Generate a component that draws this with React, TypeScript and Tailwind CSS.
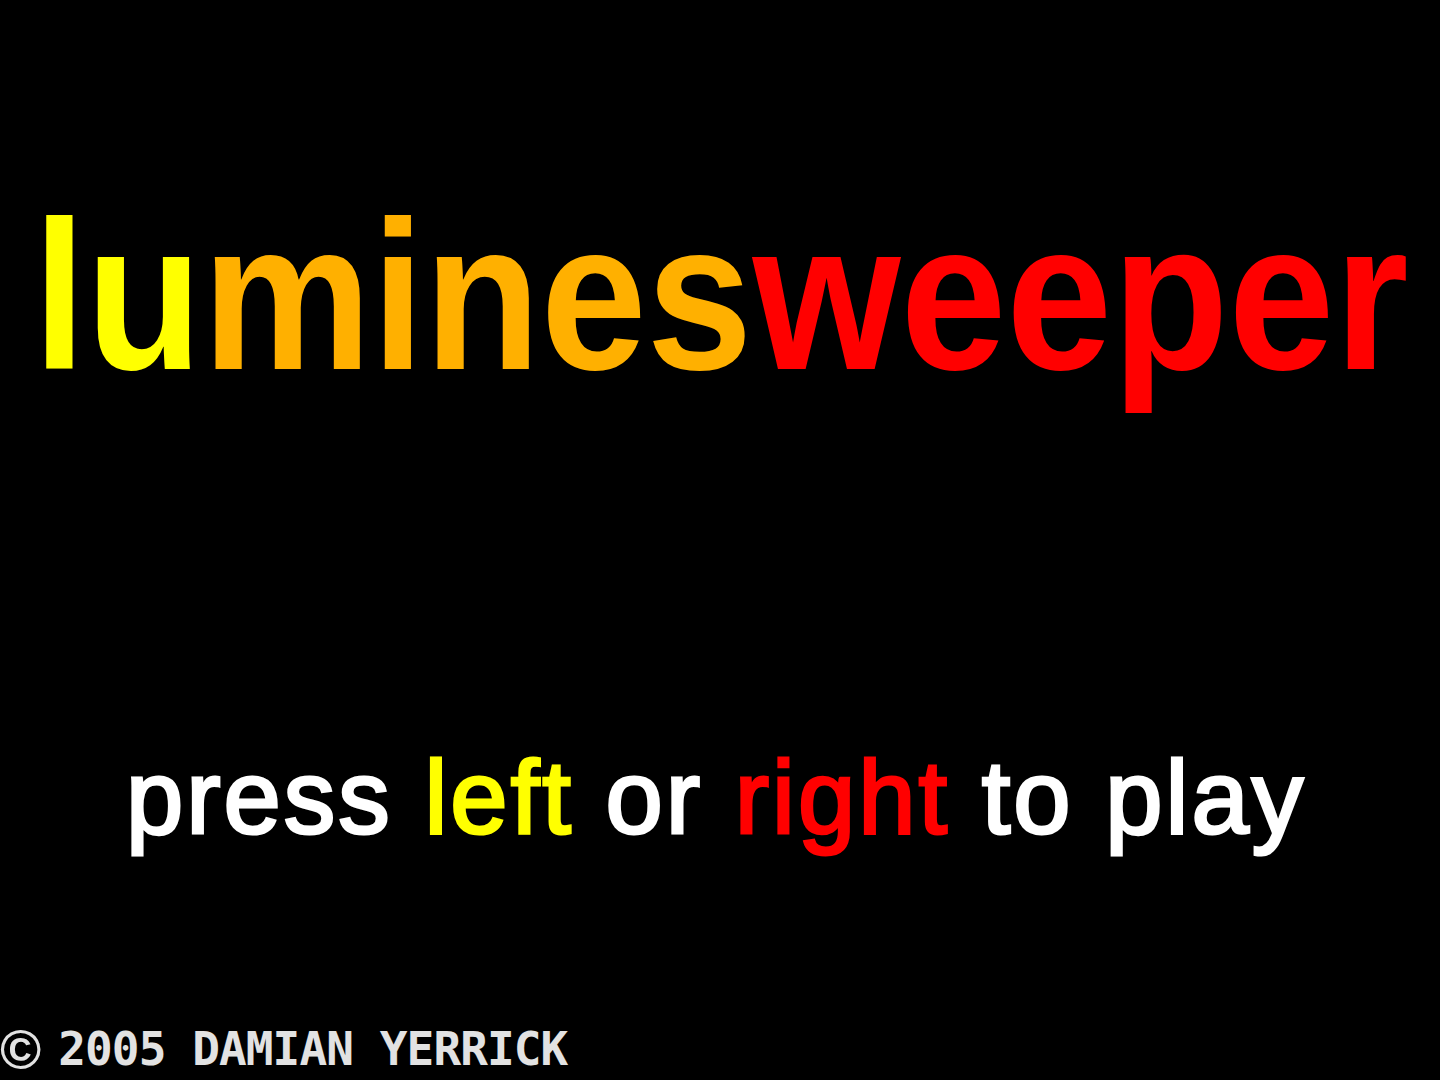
export default function App() {
  return (
    <div className="w-[1440px] h-[1080px] bg-black overflow-hidden flex flex-col">
      <div className="mt-[190px] ml-[33px] h-[212px] whitespace-nowrap">
        <div
          className="inline-block origin-left scale-x-[0.898] leading-none text-[212px] font-bold"
          style={{ fontFamily: '"Liberation Sans", Arial, sans-serif' }}
        >
          <span className="text-[#ffff00]">lu</span>
          <span className="text-[#ffb000]">mines</span>
          <span className="text-[#ff0000]">weeper</span>
        </div>
      </div>
      <div
        className="mt-[344px] ml-[126px] leading-none text-[103px] tracking-[3px] whitespace-nowrap text-white [-webkit-text-stroke:3px_currentColor]"
        style={{ fontFamily: '"Liberation Sans", Arial, sans-serif' }}
      >
        press <span className="text-[#ffff00]">left</span> or{" "}
        <span className="text-[#ff0000]">right</span> to play
      </div>
      <div className="mt-auto mb-[8px] ml-0 flex items-end whitespace-nowrap text-[#e2e2e2]">
        <span
          className="leading-none text-[56px] font-bold -mb-[6px] mr-[17px]"
          style={{ fontFamily: '"Liberation Sans", Arial, sans-serif' }}
        >
          ©
        </span>
        <span
          className="leading-none text-[46px] font-bold tracking-[-0.9px]"
          style={{ fontFamily: '"DejaVu Sans Mono", monospace' }}
        >
          2005 DAMIAN YERRICK
        </span>
      </div>
    </div>
  );
}
